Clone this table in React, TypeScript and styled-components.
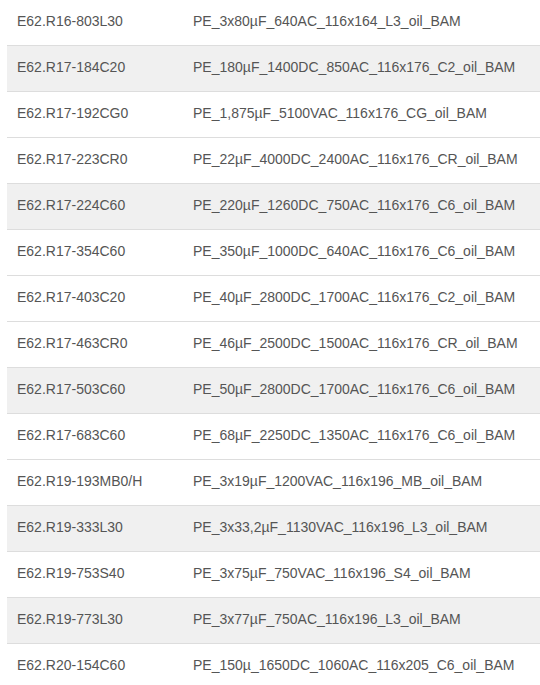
import React from "react";
import styled, { createGlobalStyle } from "styled-components";

const Global = createGlobalStyle`
  html, body { margin: 0; padding: 0; background: #fff; }
  body { font-family: "Liberation Sans", Arial, sans-serif; overflow: hidden; }
`;

const Page = styled.div`
  padding-left: 7px;
  margin-top: -1px;
`;

const Table = styled.div`
  display: flex;
  flex-direction: column;
  width: 533px;
`;

const Row = styled.div<{ $shaded?: boolean }>`
  display: grid;
  grid-template-columns: 176px 1fr;
  height: 46px;
  box-sizing: border-box;
  border-top: 1px solid #dddddd;
  background: ${(p) => (p.$shaded ? "#f0f0f0" : "#ffffff")};
`;

const Cell = styled.div`
  display: flex;
  align-items: center;
  padding-left: 10px;
  padding-bottom: 3px;
  font-size: 14px;
  color: #555555;
  white-space: nowrap;
`;

const rows: [string, string, boolean][] = [
  ["E62.R16-803L30", "PE_3x80µF_640AC_116x164_L3_oil_BAM", false],
  ["E62.R17-184C20", "PE_180µF_1400DC_850AC_116x176_C2_oil_BAM", true],
  ["E62.R17-192CG0", "PE_1,875µF_5100VAC_116x176_CG_oil_BAM", false],
  ["E62.R17-223CR0", "PE_22µF_4000DC_2400AC_116x176_CR_oil_BAM", false],
  ["E62.R17-224C60", "PE_220µF_1260DC_750AC_116x176_C6_oil_BAM", true],
  ["E62.R17-354C60", "PE_350µF_1000DC_640AC_116x176_C6_oil_BAM", false],
  ["E62.R17-403C20", "PE_40µF_2800DC_1700AC_116x176_C2_oil_BAM", false],
  ["E62.R17-463CR0", "PE_46µF_2500DC_1500AC_116x176_CR_oil_BAM", false],
  ["E62.R17-503C60", "PE_50µF_2800DC_1700AC_116x176_C6_oil_BAM", true],
  ["E62.R17-683C60", "PE_68µF_2250DC_1350AC_116x176_C6_oil_BAM", false],
  ["E62.R19-193MB0/H", "PE_3x19µF_1200VAC_116x196_MB_oil_BAM", false],
  ["E62.R19-333L30", "PE_3x33,2µF_1130VAC_116x196_L3_oil_BAM", true],
  ["E62.R19-753S40", "PE_3x75µF_750VAC_116x196_S4_oil_BAM", false],
  ["E62.R19-773L30", "PE_3x77µF_750AC_116x196_L3_oil_BAM", true],
  ["E62.R20-154C60", "PE_150µ_1650DC_1060AC_116x205_C6_oil_BAM", false],
];

export default function App() {
  return (
    <>
      <Global />
      <Page>
        <Table>
          {rows.map(([code, name, shaded]) => (
            <Row key={code} $shaded={shaded}>
              <Cell>{code}</Cell>
              <Cell>{name}</Cell>
            </Row>
          ))}
        </Table>
      </Page>
    </>
  );
}
